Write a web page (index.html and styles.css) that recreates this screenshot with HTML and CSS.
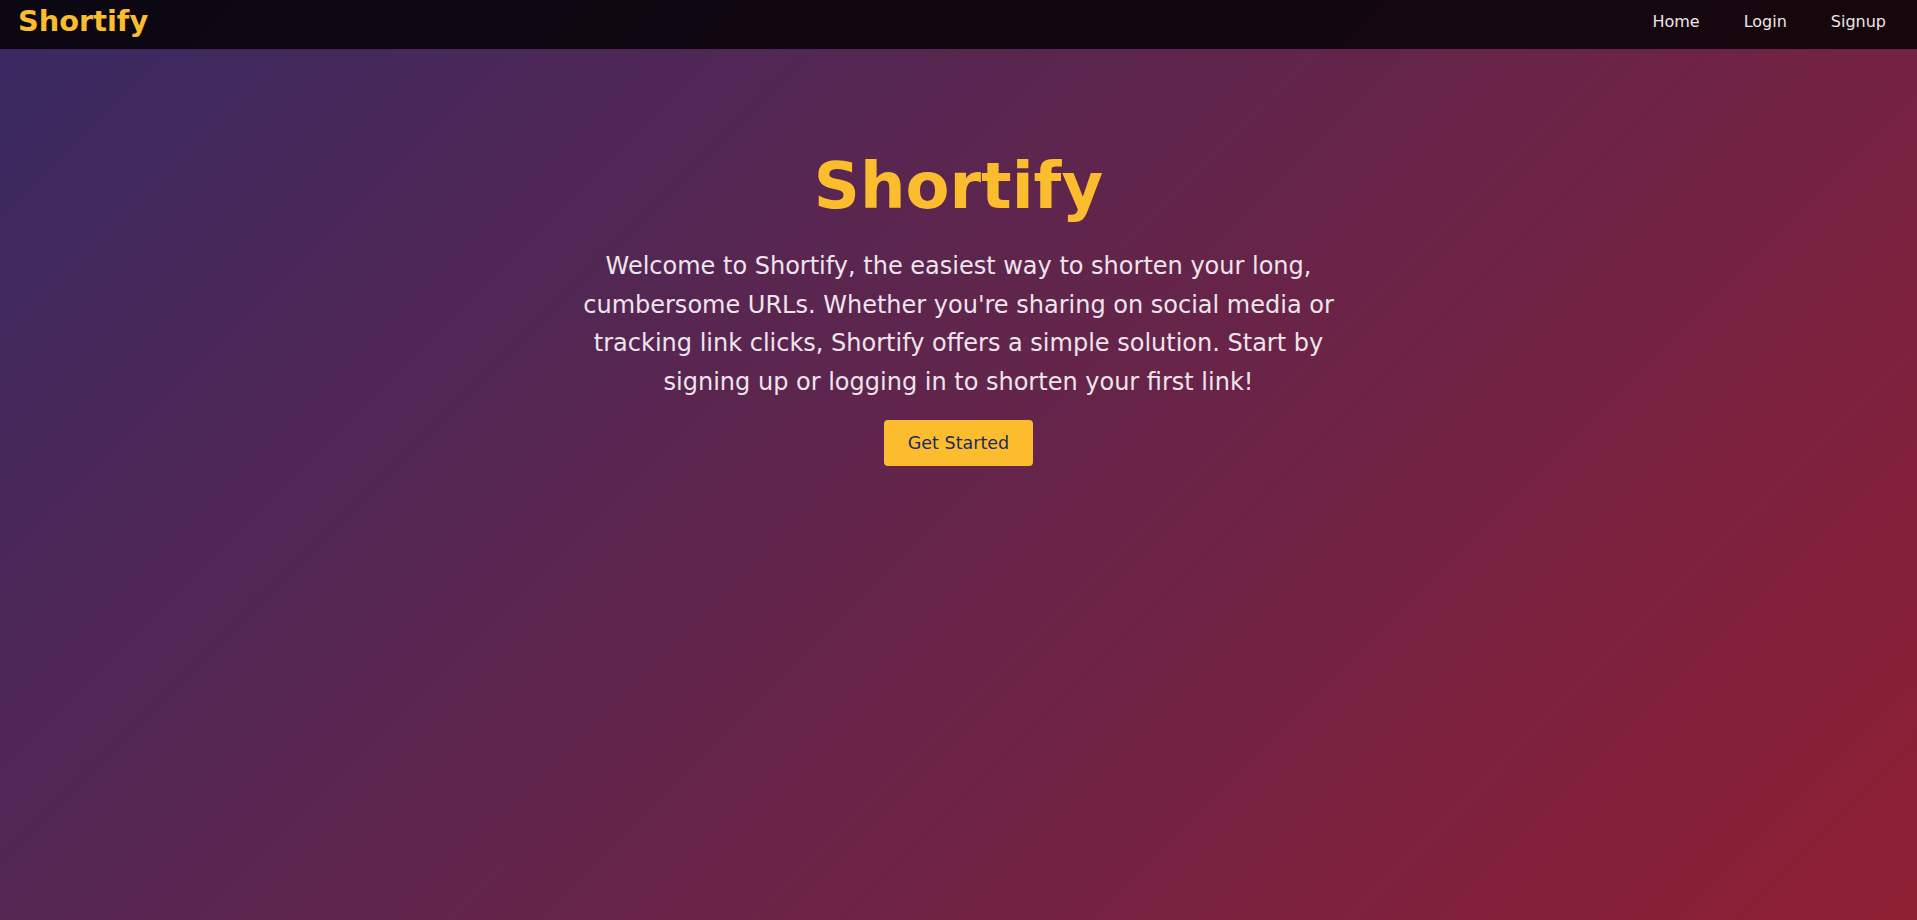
FILE: index.html
```html
<!DOCTYPE html>
<html lang="en">
<head>
<meta charset="utf-8">
<title>Shortify</title>
<link rel="stylesheet" href="styles.css">
</head>
<body>
  <nav class="navbar">
    <a class="brand" href="#">Shortify</a>
    <ul class="nav-links">
      <li><a href="#">Home</a></li>
      <li><a href="#">Login</a></li>
      <li><a href="#">Signup</a></li>
    </ul>
  </nav>
  <main class="hero">
    <h1 class="hero-title">Shortify</h1>
    <p class="hero-text">Welcome to Shortify, the easiest way to shorten your long, cumbersome URLs. Whether you're sharing on social media or tracking link clicks, Shortify offers a simple solution. Start by signing up or logging in to shorten your first link!</p>
    <a class="btn-primary" href="#">Get Started</a>
  </main>
</body>
</html>
```
FILE: styles.css
```css
* { box-sizing: border-box; }

html, body {
  margin: 0;
  padding: 0;
  height: 100%;
}

body {
  font-family: "DejaVu Sans", sans-serif;
  color: #f1e9ef;
  background: linear-gradient(135deg, #382a62 0%, #8f1f33 100%);
  background-attachment: fixed;
  min-height: 100vh;
}

.navbar {
  display: flex;
  align-items: center;
  justify-content: space-between;
  height: 49px;
  padding: 0 9px 6px 18px;
  background: rgba(0, 0, 0, 0.8);
}

.brand {
  font-size: 28.8px;
  font-weight: bold;
  color: #fbbd2e;
  text-decoration: none;
  line-height: 1.164;
}

.nav-links {
  display: flex;
  list-style: none;
  margin: 0;
  padding: 0;
}

.nav-links a {
  display: block;
  padding: 6px 22px;
  font-size: 16px;
  color: #ece6ea;
  text-decoration: none;
}

.hero {
  display: flex;
  flex-direction: column;
  align-items: center;
  text-align: center;
  padding-top: 100px;
}

.hero-title {
  margin: 0 0 24px;
  font-size: 64px;
  font-weight: bold;
  line-height: 1.164;
  color: #fbbd2e;
}

.hero-text {
  margin: 0 0 19px;
  max-width: 800px;
  font-size: 24px;
  line-height: 1.6;
  color: #efe4ec;
}

.btn-primary {
  display: inline-block;
  padding: 12px 24px;
  font-size: 17.5px;
  line-height: 22px;
  color: #1c2a5e;
  background: #fbbd2e;
  border-radius: 4px;
  text-decoration: none;
}
```
